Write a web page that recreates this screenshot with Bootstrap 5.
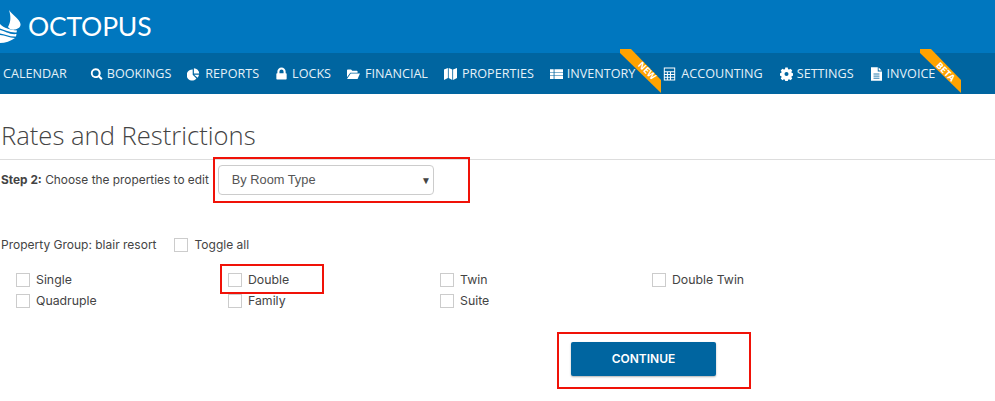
<!DOCTYPE html>
<html lang="en"><head><meta charset="utf-8"><title>Rates and Restrictions</title>
<link rel="stylesheet" href="https://cdn.jsdelivr.net/npm/bootstrap@5.3.0/dist/css/bootstrap.min.css">
<style>
body{background:#fff;font-family:"Inter","Noto Sans",sans-serif;color:#444;font-size:12px;position:relative;overflow:hidden;height:401px}
.top-bar{height:53px;background:#0077bf}
.logo-word{font-family:"Lato",sans-serif;font-weight:400;font-size:26.5px;letter-spacing:-.2px;color:#fff;line-height:1;margin:4px 0 0 6px}
.logo-box{padding:9px 0 0 0}
.menu-bar{height:41px;background:#0065a0;padding:1px 0 0 3px;font-family:"Open Sans",sans-serif;font-size:12.6px;color:#e4f1f8;position:relative}
.menu-item{gap:5px;white-space:nowrap;position:relative}
.menu-item svg{width:13px;height:14px;fill:#fff;flex:none}
.menu-item svg.slim{width:11px}
.gap-a{margin-right:23px}.gap-b{margin-right:16px}.gap-c{margin-right:17px}.gap-d{margin-right:16px}.gap-e{margin-right:28px}
.tight{gap:4px}
.ribbon{position:absolute;top:49px;width:42px;height:44px;overflow:hidden}
.ribbon svg{display:block}
.ribbon text{font-family:"Open Sans",sans-serif;font-weight:700;font-size:9px;fill:#fff;text-anchor:middle}
.rib-a{left:620px}.rib-b{left:920px}
.page-title{font-family:"Open Sans",sans-serif;font-weight:300;font-size:25.6px;color:#444;margin:0;padding:26px 0 0 1px;line-height:32px;height:66px;border-bottom:1px solid #ddd}
.step-row{height:40px;padding-left:1px;gap:9px;font-size:11.88px}
.step-row b{font-weight:700}
.pick-box{width:216px;height:30px;font-family:"Liberation Sans",sans-serif;font-size:12.8px;color:#555;border:1px solid #ccc;border-radius:4px;padding:0 2px 0 13px}
.pick-arrow{font-size:10px;color:#444}
.group-row{margin-top:36px;padding-left:1px;gap:17px;height:18px}
.tick{width:14px;height:14px;border:1px solid #ccc;flex:none;display:block;background:#fff}
.tick-wrap{gap:7px}
.room-grid{display:grid;grid-template-columns:repeat(4,212px);row-gap:5px;padding:18px 0 0 16px;font-size:12.3px}
.room-grid .tick-wrap{height:16px;gap:6px}
.go-btn{width:145px;height:34px;background:#0065a0;border-radius:2px;color:#fff;font-weight:600;font-size:12px;border:0;margin:33px 0 0 571px;display:flex;align-items:center;justify-content:center;box-shadow:0 1px 2px rgba(0,0,0,.3);padding:0}
.mark-box{position:absolute;border:2px solid #f01208;pointer-events:none}
.mb-a{left:213px;top:157px;width:257px;height:46px}
.mb-b{left:220px;top:264px;width:104px;height:30px}
.mb-c{left:557px;top:332px;width:194px;height:57px}
</style></head><body>
<header class="top-bar d-flex">
  <div class="logo-box d-flex align-items-start">
    <svg width="22" height="35" viewBox="0 0 22 35" aria-hidden="true"><path fill="#fff" d="M9 1C12 6 20 10 20.500 15C21 18 18 20 15 20.500C12 21 9 20 8 18C11 13 11 7 9 1Z"/><path fill="#fff" d="M0 15C4 19 10 21 17 21.500L16.500 23.500C10 24 5 21 0 19.500ZM0 21C5 22 10 26 16.500 25L16 27.500C10 28 5 25 0 24.500ZM0 26C5 26 9 29 15 29C11 32 5 34 0 34Z"/></svg>
    <span class="logo-word">OCTOPUS</span>
  </div>
</header>
<nav class="menu-bar d-flex align-items-center">
  <div class="menu-item d-flex align-items-center gap-a">CALENDAR</div>
  <div class="menu-item tight d-flex align-items-center gap-b"><svg viewBox="0 0 16 16"><path d="M7 1a6 6 0 1 0 3.400 11l3.300 3.300 1.800-1.800-3.300-3.300A6 6 0 0 0 7 1Zm0 2.300a3.700 3.700 0 1 1 0 7.400 3.700 3.700 0 0 1 0-7.400Z"/></svg>BOOKINGS</div>
  <div class="menu-item d-flex align-items-center gap-c"><svg viewBox="0 0 16 16"><path d="M7 2.500V9l4.600 4.600A6.800 6.800 0 1 1 7 2.500Z"/><path d="M8.500 1a6.500 6.500 0 0 1 6.500 6.500H8.500ZM8.800 9h6a6.700 6.700 0 0 1-1.800 3.600Z"/></svg>REPORTS</div>
  <div class="menu-item d-flex align-items-center gap-d"><svg class="slim" viewBox="0 0 16 18"><path d="M2 8V5.500a6 6 0 0 1 12 0V8h.5a1 1 0 0 1 1 1v7a1 1 0 0 1-1 1h-13a1 1 0 0 1-1-1V9a1 1 0 0 1 1-1Zm3 0h6V5.500a3 3 0 0 0-6 0Z"/></svg>LOCKS</div>
  <div class="menu-item d-flex align-items-center gap-d"><svg viewBox="0 0 16 16"><path d="M0 12V3.500A1 1 0 0 1 1 2.500h4l1.500 1.500H12a1 1 0 0 1 1 1V6.500H4L0 12Z"/><path d="M4.500 7.500H16l-3 6.500H0Z"/></svg>FINANCIAL</div>
  <div class="menu-item d-flex align-items-center gap-d"><svg viewBox="0 0 16 16"><path d="M0 2.500 4.800 .5V13L0 15.500ZM5.800 .5 10.200 2.500V15.500L5.800 13ZM11.200 2.500 16 .5V13L11.200 15.500Z"/></svg>PROPERTIES</div>
  <div class="menu-item tight d-flex align-items-center gap-e"><svg viewBox="0 0 16 16"><path d="M0 2h4.500v3.400H0ZM5.500 2H16v3.400H5.500ZM0 6.300h4.500v3.400H0ZM5.500 6.300H16v3.400H5.500ZM0 10.600h4.500V14H0ZM5.500 10.600H16V14H5.500Z"/></svg>INVENTORY</div>
  <div class="menu-item d-flex align-items-center gap-c"><svg viewBox="0 0 16 16"><path fill-rule="evenodd" d="M1 0h14v16H1ZM2.200 1.200V4.500h11.600V1.200ZM2.200 5.700V8h2.600V5.700ZM6 5.700V8h2.600V5.700ZM9.800 5.700V8h4V5.700ZM2.200 9.200V11.500h2.600V9.200ZM6 9.200V11.500h2.600V9.200ZM9.800 9.200V11.500h4V9.200ZM2.200 12.700v2.100h2.600v-2.100ZM6 12.700v2.100h2.600v-2.100ZM9.800 12.700v2.100h4v-2.100Z"/></svg>ACCOUNTING</div>
  <div class="menu-item tight d-flex align-items-center gap-c"><svg viewBox="0 0 16 16"><path fill-rule="evenodd" d="M6.500 0h3l.4 2 1.300.6 1.800-1.100 2.100 2.100-1.100 1.800.6 1.300 2 .4v3l-2 .4-.6 1.300 1.100 1.800-2.100 2.100-1.800-1.100-1.300.6-.4 2h-3l-.4-2-1.300-.6-1.800 1.100-2.100-2.100 1.100-1.800-.6-1.300-2-.4v-3l2-.4.6-1.300-1.100-1.800 2.100-2.100 1.800 1.100 1.300-.6ZM8 5.500a2.500 2.500 0 1 0 0 5 2.500 2.500 0 0 0 0-5Z"/></svg>SETTINGS</div>
  <div class="menu-item d-flex align-items-center"><svg class="slim" viewBox="0 0 13 16"><path d="M0 0H8V5H13V16H0ZM9 .3 12.700 4H9Z"/><path stroke="#0065a0" d="M3 8h7M3 10.500h7M3 13h7"/></svg>INVOICE</div>
</nav>
<div class="ribbon rib-a"><svg width="42" height="44" viewBox="0 0 42 44"><path fill="#ffa200" d="M0 0H11L41 31V44L0 4Z"/><text x="0" y="0" transform="translate(25 24) rotate(45)">NEW</text></svg></div>
<div class="ribbon rib-b"><svg width="42" height="44" viewBox="0 0 42 44"><path fill="#ffa200" d="M0 0H11L41 31V44L0 4Z"/><text x="0" y="0" transform="translate(23.500 25) rotate(45)">BETA</text></svg></div>
<main>
  <h1 class="page-title">Rates and Restrictions</h1>
  <div class="step-row d-flex align-items-center">
    <span><b>Step 2:</b> Choose the properties to edit</span>
    <div class="pick-box d-flex align-items-center justify-content-between"><span>By Room Type</span><span class="pick-arrow">&#9660;</span></div>
  </div>
  <div class="group-row d-flex align-items-center">
    <span>Property Group: blair resort</span>
    <label class="tick-wrap d-flex align-items-center"><span class="tick"></span>Toggle all</label>
  </div>
  <div class="room-grid">
    <label class="tick-wrap d-flex align-items-center"><span class="tick"></span>Single</label>
    <label class="tick-wrap d-flex align-items-center"><span class="tick"></span>Double</label>
    <label class="tick-wrap d-flex align-items-center"><span class="tick"></span>Twin</label>
    <label class="tick-wrap d-flex align-items-center"><span class="tick"></span>Double Twin</label>
    <label class="tick-wrap d-flex align-items-center"><span class="tick"></span>Quadruple</label>
    <label class="tick-wrap d-flex align-items-center"><span class="tick"></span>Family</label>
    <label class="tick-wrap d-flex align-items-center"><span class="tick"></span>Suite</label>
  </div>
  <button type="button" class="btn go-btn">CONTINUE</button>
</main>
<div class="mark-box mb-a"></div><div class="mark-box mb-b"></div><div class="mark-box mb-c"></div>
<script src="https://cdn.jsdelivr.net/npm/bootstrap@5.3.0/dist/js/bootstrap.bundle.min.js"></script>
</body></html>
